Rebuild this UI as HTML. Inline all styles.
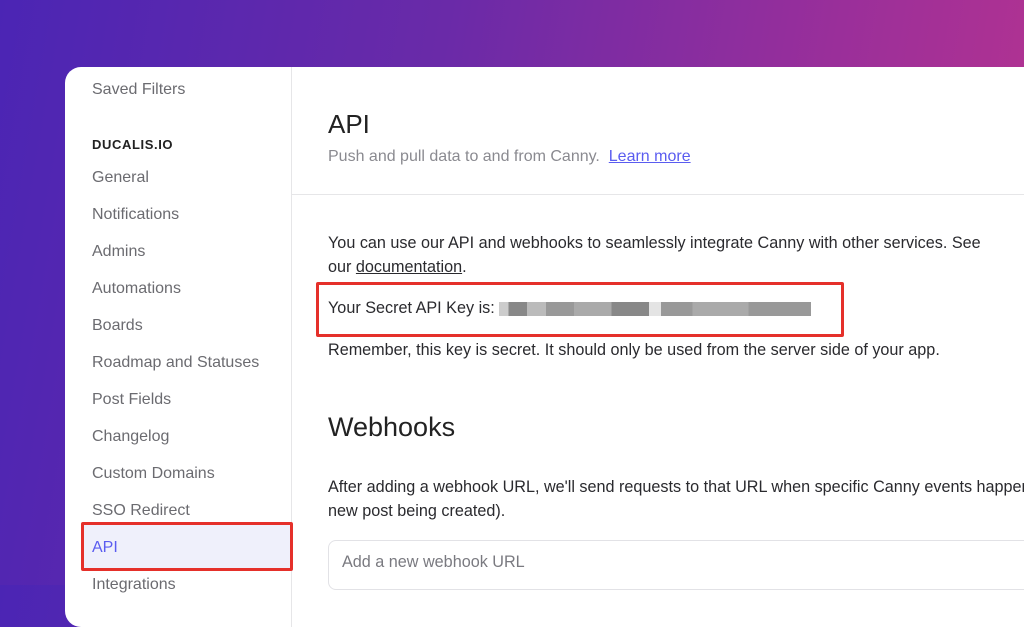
<!DOCTYPE html>
<html><head><style>
*{margin:0;padding:0;box-sizing:border-box}
body{width:1024px;height:585px;overflow:hidden;position:relative;font-family:"Liberation Sans",sans-serif;
background:linear-gradient(100deg,#4b25b4 0%,#6a2aa8 40%,#9a2f9a 75%,#b8338f 100%);}
.card{position:absolute;left:65px;top:67px;width:1000px;height:560px;background:#fff;border-radius:16px;overflow:hidden}
.side{position:absolute;left:0;top:0;width:227px;height:100%;border-right:1px solid #e6e6e8}
.it{position:absolute;left:27px;font-size:16px;color:#6b6b70;line-height:20px;white-space:nowrap}
.hd{position:absolute;left:27px;font-size:13px;font-weight:bold;color:#222;letter-spacing:.6px}
.sel{position:absolute;left:16px;top:455px;width:212px;height:49px;border:3px solid #e5302a;background:#eff0fb;border-radius:2px}
.t{position:absolute;font-size:16.2px;color:#2a2a2e;line-height:20px;white-space:nowrap}
.key{display:inline-block;vertical-align:middle;height:14px;width:312px;margin-left:4px;
background:linear-gradient(90deg,#ccc 0 3%,#888 3% 9%,#bbb 9% 15%,#999 15% 24%,#aaa 24% 36%,#888 36% 48%,#e4e4e4 48% 52%,#999 52% 62%,#aaa 62% 80%,#999 80% 100%)}
</style></head><body>
<div class="card">
<div class="side">
<div class="it" style="top:13px">Saved Filters</div>
<div class="hd" style="top:70px">DUCALIS.IO</div>
<div class="it" style="top:101px">General</div>
<div class="it" style="top:138px">Notifications</div>
<div class="it" style="top:175px">Admins</div>
<div class="it" style="top:212px">Automations</div>
<div class="it" style="top:249px">Boards</div>
<div class="it" style="top:286px">Roadmap and Statuses</div>
<div class="it" style="top:323px">Post Fields</div>
<div class="it" style="top:360px">Changelog</div>
<div class="it" style="top:397px">Custom Domains</div>
<div class="it" style="top:434px">SSO Redirect</div>
<div class="sel"></div>
<div class="it" style="top:471px;color:#5a5cf0">API</div>
<div class="it" style="top:508px">Integrations</div>
</div>
<div style="position:absolute;left:227px;top:127px;width:800px;height:1px;background:#e6e6e8"></div>
<div class="t" style="left:263px;top:41px;font-size:26px;line-height:32px;color:#222">API</div>
<div class="t" style="left:263px;top:80px;font-size:16px;color:#8a8a90">Push and pull data to and from Canny.&nbsp; <span style="color:#5a5cf0;text-decoration:underline">Learn more</span></div>
<div class="t" style="left:263px;top:166px">You can use our API and webhooks to seamlessly integrate Canny with other services. See</div>
<div class="t" style="left:263px;top:190px">our <span style="text-decoration:underline">documentation</span>.</div>
<div style="position:absolute;left:251px;top:215px;width:528px;height:55px;border:3px solid #e5302a;border-radius:2px"></div>
<div class="t" style="left:263px;top:231px">Your Secret API Key is:<span class="key"></span></div>
<div class="t" style="left:263px;top:273px">Remember, this key is secret. It should only be used from the server side of your app.</div>
<div class="t" style="left:263px;top:343px;font-size:27px;line-height:34px;color:#222">Webhooks</div>
<div class="t" style="left:263px;top:410px">After adding a webhook URL, we'll send requests to that URL when specific Canny events happen</div>
<div class="t" style="left:263px;top:434px">new post being created).</div>
<div style="position:absolute;left:263px;top:473px;width:740px;height:50px;border:1px solid #e2e2e6;border-radius:8px"></div>
<div class="t" style="left:277px;top:485px;color:#7a7a80">Add a new webhook URL</div>
</div>
</body></html>
